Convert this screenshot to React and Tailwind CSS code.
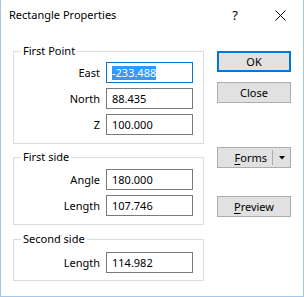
import React from 'react';

const font = { fontFamily: '"Noto Sans", "Open Sans", sans-serif' };

function Field({ label, value, selected }) {
  return (
    <div className="flex items-center justify-end gap-[6px] pr-[10px]">
      <span className="text-[11px] leading-[16px] text-black">{label}</span>
      <div
        className={
          'w-[87px] h-[21px] flex items-center pl-[5px] bg-white border ' +
          (selected ? 'border-[#0078d7]' : 'border-[#7a7a7a]')
        }
      >
        {selected ? (
          <span className="bg-[#3399ff] text-white text-[11px] leading-[14px]">{value}</span>
        ) : (
          <span className="text-black text-[11px] leading-[14px]">{value}</span>
        )}
      </div>
    </div>
  );
}

function Group({ title, children, className }) {
  return (
    <div className={'relative border border-[#dcdcdc] flex flex-col gap-[5px] ' + className}>
      <span className="absolute left-[7px] -top-[9px] bg-white px-[2px] text-[11px] leading-[16px] text-black">
        {title}
      </span>
      {children}
    </div>
  );
}

function Button({ children, primary }) {
  return (
    <button
      className={
        'w-[74px] h-[21px] bg-[#e1e1e1] text-[11px] leading-[14px] text-black flex items-center justify-center ' +
        (primary ? 'border-2 border-[#0078d7]' : 'border border-[#adadad]')
      }
    >
      {children}
    </button>
  );
}

export default function App() {
  return (
    <div
      className="w-[304px] h-[297px] bg-white border-l border-r border-b border-[#a6c8e6] flex flex-col"
      style={font}
    >
      <div className="h-[31px] flex items-center pl-[8px] pr-[17px]">
        <span className="text-[11px] text-black flex-1">Rectangle Properties</span>
        <span className="text-[13px] text-black mr-[37px]">?</span>
        <svg width="11" height="11" viewBox="0 0 11 11">
          <path d="M0.5 0.5 L10.5 10.5 M10.5 0.5 L0.5 10.5" stroke="#000" strokeWidth="1" />
        </svg>
      </div>

      <div className="flex pl-[12px] pt-[20px] gap-[13px]">
        <div className="w-[191px] flex flex-col">
          <Group title="First Point" className="pt-[10px] pb-[8px]">
            <Field label="East" value="-233.488" selected />
            <Field label="North" value="88.435" />
            <Field label="Z" value="100.000" />
          </Group>
          <Group title="First side" className="mt-[13px] pt-[11px] pb-[8px]">
            <Field label="Angle" value="180.000" />
            <Field label="Length" value="107.746" />
          </Group>
          <Group title="Second side" className="mt-[14px] pt-[12px] pb-[7px]">
            <Field label="Length" value="114.982" />
          </Group>
        </div>

        <div className="w-[74px] flex flex-col">
          <Button primary>OK</Button>
          <div className="mt-[10px]">
            <Button>Close</Button>
          </div>
          <div className="mt-[44px] w-[74px] h-[21px] bg-[#e1e1e1] border border-[#adadad] flex items-center text-[11px] leading-[14px] text-black">
            <span className="flex-1 text-right pr-[5px]">
              <span className="underline underline-offset-2">F</span>orms
            </span>
            <span className="w-[1px] h-[15px] bg-[#adadad]"></span>
            <span className="w-[17px] flex justify-center">
              <svg width="6" height="4" viewBox="0 0 6 4">
                <path d="M0 0 H6 L3 3.5 Z" fill="#000" />
              </svg>
            </span>
          </div>
          <div className="mt-[28px]">
            <Button>
              <span>
                <span className="underline underline-offset-2">P</span>review
              </span>
            </Button>
          </div>
        </div>
      </div>
    </div>
  );
}
